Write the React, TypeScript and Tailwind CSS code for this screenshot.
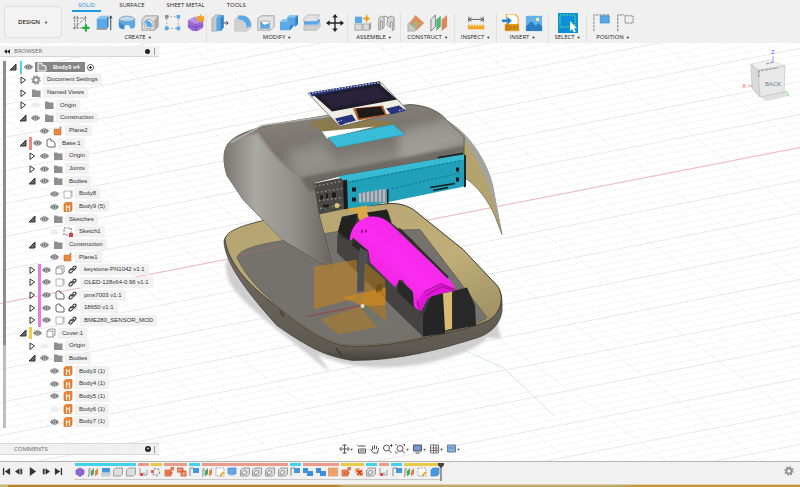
import type { ReactNode } from "react";

/* ---------- ribbon icons (20 x 20 grid) ---------- */

const BLUE = "#5aa9e6";
const DARKBLUE = "#2f7fc4";

const ribbonIcons: Record<string, ReactNode> = {
  sketch: (
    <g fill="none" stroke="#777" strokeWidth="1">
      <path d="M3 2v16M1 4.500h16M1 15.500h12M15 2v9M3 15L15 4M6 2v14" strokeDasharray="3 1" />
      <path d="M15.500 11.500v8M11.500 15.500h8" stroke="#27a83a" strokeWidth="2.400" />
    </g>
  ),
  extrude: (
    <g>
      <path d="M2 5l4-3h9l-2 3z" fill="#8cc6f0" />
      <path d="M2 5h11v12H2z" fill={BLUE} />
      <path d="M13 5l2-3v12l-2 3z" fill={DARKBLUE} />
      <path d="M2 15.500h11v2H2z" fill="#999" />
      <path d="M17.500 18V3M16 5l1.500-3L19 5" stroke="#333" fill="none" />
    </g>
  ),
  revolve: (
    <g>
      <path d="M1 6c3-5 15-5 18 0v8c-2 3-4 3-6 1v-2c-2-1-4-1-6 0v4c-3 0-5-1-6-3z" fill={BLUE} />
      <path d="M1 6c3-5 15-5 18 0-3 3-15 3-18 0z" fill="#b9d9f1" stroke="#888" strokeWidth=".7" />
      <path d="M1 8v6c1 2 3 3 6 3v-5c-3 0-5-2-6-4z" fill="#3a8cd0" />
    </g>
  ),
  hole: (
    <g>
      <path d="M1 6l4-4h14v12l-4 4H1z" fill="#dcdcdc" stroke="#888" strokeWidth=".8" />
      <path d="M15 18V7l4-5v12z" fill="#aaa" />
      <ellipse cx="8.500" cy="11" rx="5" ry="5" fill="#fff" stroke="#777" strokeWidth=".7" />
      <path d="M5 7c5 0 8 3 7 7-4 2-8 0-7-7z" fill={BLUE} />
    </g>
  ),
  pattern: (
    <g>
      <path d="M3 3h13v13H3z" fill="none" stroke="#999" strokeDasharray="2 2" />
      <path d="M14 1h4v4h-4zM1 14h4v4H1zM14 14h4v4h-4z" fill={BLUE} />
      <path d="M1 1h4v4H1z" fill="#8a9096" />
    </g>
  ),
  form: (
    <g>
      <path d="M1 7l8-4 9 4v8l-6 4H6l-5-4z" fill="#9b6bd3" />
      <path d="M1 7l8-4 9 4-8 4z" fill="#b994e6" />
      <path d="M10 11v8M1 13l9 2 8-3" stroke="#7a46b8" fill="none" />
      <path d="M15 0l1.400 2.600L19 2l-.6 2.800L20 7l-3 .4L15 10l-1.700-2.600L10 7l1.600-2.200L11 2l2.600.6z" fill="#f5a21c" />
    </g>
  ),
  presspull: (
    <g>
      <path d="M1 5l4-4h5v14l-3 4H1z" fill="#c9c9c9" stroke="#888" strokeWidth=".6" />
      <path d="M6 5l3-4h5v14l-3 4H6z" fill={BLUE} />
      <path d="M11 5l3-4v14l-3 4z" fill={DARKBLUE} />
      <path d="M14 10h5M17 8l2 2-2 2" stroke="#333" fill="none" />
    </g>
  ),
  fillet: (
    <g>
      <path d="M1 6l4-4h4c6 0 10 5 10 11v2l-5 4H1z" fill="#dedede" stroke="#999" strokeWidth=".6" />
      <path d="M5 2h4c6 0 10 5 10 11l-5 3C14 10 11 6 4 6z" fill={BLUE} />
      <path d="M1 6h3c6 0 10 4 10 10v3H1z" fill="#cfcfcf" />
    </g>
  ),
  shell: (
    <g>
      <path d="M1 5l4-3h14v12l-4 4H1z" fill="#e4e4e4" stroke="#888" strokeWidth=".8" />
      <path d="M4 8h10v8H4z" fill="#fff" stroke="#777" strokeWidth=".6" />
      <path d="M4 16V8l4 4 6-2v6z" fill={BLUE} />
    </g>
  ),
  combine: (
    <g>
      <path d="M8 4l3-3h9v10l-3 3h-3l-3 4H0V9l3-3h5z" fill={BLUE} />
      <path d="M17 4l3-3v10l-3 3zM11 14l3-3v4l-3 3z" fill={DARKBLUE} />
      <path d="M8 4l3-3h9l-3 3zM0 9l3-3h5v3z" fill="#8cc6f0" />
    </g>
  ),
  offset: (
    <g>
      <path d="M1 5l4-4h14l-3 4v4H1z" fill="#e2e2e2" stroke="#999" strokeWidth=".6" />
      <path d="M1 8h14l4-3v4l-3 3H1z" fill={BLUE} />
      <path d="M1 13h15l3-3v4l-4 4H1z" fill="#cfcfcf" stroke="#999" strokeWidth=".6" />
    </g>
  ),
  move: (
    <g>
      <path d="M10 2v16M2 10h16" stroke="#222" strokeWidth="1.500" />
      <path d="M10 0L7 4h6zM10 20l-3-4h6zM0 10l4-3v6zM20 10l-4-3v6z" fill="#222" />
    </g>
  ),
  component: (
    <g>
      <path d="M1 3h8v7H1z" fill={BLUE} />
      <path d="M1 11h8v7H1zM10 11h7v7h-7z" fill="#dadada" stroke="#888" strokeWidth=".7" />
      <path d="M17 11l2-2v7l-2 2z" fill="#999" />
      <path d="M14 0l1.500 3.500L19 5l-3.500 1.500L14 10l-1.500-3.500L9 5l3.500-1.500z" fill="#f5a21c" />
    </g>
  ),
  joint: (
    <g fill="#d5d5d5" stroke="#888" strokeWidth=".9">
      <path d="M2 18V5l3-3 3 2v10l-2 3V8H4v9zM12 4l5-2 2 2v13l-2 2V9h-2v6l-4-3z" />
      <path d="M7 4c2-2 3-2 5 0" fill="none" stroke="#666" />
    </g>
  ),
  plane: (
    <g>
      <path d="M1 19V11l6-5v7h6l-4 6z" fill="#c9ccc8" stroke="#888" strokeWidth=".6" />
      <path d="M9 1l10 9-8 8-8-7z" fill="#e08e5c" />
      <path d="M8 8l5 2-3 8-4-5z" fill="#8bc09a" opacity=".8" />
    </g>
  ),
  midplane: (
    <g>
      <path d="M1 6l5-5v13l-5 5z" fill="#e5e5e5" stroke="#777" />
      <path d="M7 6l5-4v12l-5 5z" fill="#4db87d" />
      <path d="M13 6l6-5v13l-6 5z" fill="#e0875a" />
    </g>
  ),
  measure: (
    <g>
      <path d="M2 3v6M18 3v6M2 6h16M5 4L2 6l3 2M15 4l3 2-3 2" stroke="#555" fill="none" />
      <path d="M1 12h18v5H1z" fill="#f0a41f" />
      <path d="M4 12v2M7 12v2M10 12v2M13 12v2M16 12v2" stroke="#fff" />
    </g>
  ),
  insert: (
    <g>
      <path d="M5 0h9l4 4v10H5z" fill="#fff" stroke="#f0a41f" strokeWidth="1.200" />
      <path d="M3 11h16v8H3z" fill="#e89b16" />
      <path d="M5 13h3v4H5zM10 13v4M12 13l3 4M15 13l-3 4M17 13v4" stroke="#8a5604" fill="none" strokeWidth=".8" />
      <path d="M0 6h6V3l5 4.500L6 12V9H0z" fill="#2284d2" />
    </g>
  ),
  image: (
    <g>
      <path d="M1 2h18v17H1z" fill="#64b1ea" />
      <path d="M1 14l6-6 5 5 3-3 4 4v5H1z" fill="#2b7fc2" />
      <circle cx="14" cy="6" r="2" fill="#fbe9a0" />
    </g>
  ),
  select: (
    <g>
      <path d="M0 0h20v20H0z" fill="#0c8edb" />
      <path d="M2 2h15v12H2z" fill="none" stroke="#5be08a" strokeDasharray="2 1" />
      <path d="M12 8v10l2.300-2 1.600 3.500 1.800-.9-1.600-3.300H19z" fill="#fff" />
    </g>
  ),
  capture: (
    <g>
      <path d="M1 19V1h17" fill="none" stroke="#777" strokeDasharray="3 1" />
      <path d="M8 2h10v8H8z" fill={BLUE} stroke={DARKBLUE} strokeWidth=".7" />
    </g>
  ),
  revert: (
    <g fill="none" stroke="#666">
      <path d="M2 19V1h7" strokeDasharray="3 1" />
      <path d="M10 2h9v8h-9z" strokeDasharray="2 1" />
    </g>
  ),
};

type Group = { label: string; icons: string[]; width: string };

const groups: Group[] = [
  { label: "CREATE", icons: ["sketch", "extrude", "revolve", "hole", "pattern", "form"], width: "w-[137px] border-r" },
  { label: "MODIFY", icons: ["presspull", "fillet", "shell", "combine", "offset", "move"], width: "w-[141px] border-r" },
  { label: "ASSEMBLE", icons: ["component", "joint"], width: "w-[53px] border-r" },
  { label: "CONSTRUCT", icons: ["plane", "midplane"], width: "w-[54px] border-r" },
  { label: "INSPECT", icons: ["measure"], width: "w-[42px] border-r" },
  { label: "INSERT", icons: ["insert", "image"], width: "w-[52px] border-r" },
  { label: "SELECT", icons: ["select"], width: "w-[38px] border-r" },
  { label: "POSITION", icons: ["capture", "revert"], width: "w-[52px]" },
];

function Ribbon() {
  return (
    <header className="flex h-[43px] shrink-0 bg-[#f0f0f0]">
      <button className="mt-[6px] mr-2 ml-[4px] flex h-8 w-[58px] shrink-0 items-center justify-center gap-1 rounded-sm border border-[#dcdcdc] bg-[#f3f3f3] font-semibold">
        DESIGN <span className="text-[4px]">▼</span>
      </button>
      <div className="flex min-w-0 flex-1 flex-col">
        <nav className="flex h-[12px] shrink-0 gap-[22px] pl-[2px]">
          <button className="border-b-2 border-[#1a9be0] px-[6px] text-[#1a8fd8]">SOLID</button>
          <button className="-ml-[4px] border-b-2 border-transparent">SURFACE</button>
          <button className="border-b-2 border-transparent">SHEET METAL</button>
          <button className="border-b-2 border-transparent">TOOLS</button>
        </nav>
        <div className="flex pt-px">
          {groups.map((g) => (
            <section key={g.label} className={`${g.width} flex shrink-0 flex-col items-center border-[#e0e0e0]`}>
              <div className="flex h-5 gap-[3px]">
                {g.icons.map((n) => (
                  <button key={n} aria-label={n} className="flex size-5 items-center justify-center">
                    <svg viewBox="0 0 20 20" className={n === "select" ? "size-5" : "size-[18px]"}>
                      {ribbonIcons[n]}
                    </svg>
                  </button>
                ))}
              </div>
              <button className="flex h-[9px] items-center gap-[2px]">
                {g.label} <span className="text-[4px]">▼</span>
              </button>
            </section>
          ))}
        </div>
      </div>
    </header>
  );
}

/* ---------- browser tree ---------- */

type Kind = "gear" | "folder" | "plane" | "comp" | "body" | "bodyOrange" | "sketch" | "box" | "doc";
type Row = {
  label: string;
  depth: 0 | 1 | 2 | 3;
  arrow?: "open" | "closed";
  bar?: "pink" | "magenta" | "yellow" | "cyan";
  eye?: "on" | "off";
  kind: Kind;
  link?: boolean;
};

const rows: Row[] = [
  { label: "Body3 v4", depth: 0, arrow: "open", bar: "cyan", eye: "on", kind: "doc" },
  { label: "Document Settings", depth: 1, arrow: "closed", kind: "gear" },
  { label: "Named Views", depth: 1, arrow: "closed", kind: "folder" },
  { label: "Origin", depth: 1, arrow: "closed", eye: "off", kind: "folder" },
  { label: "Construction", depth: 1, arrow: "open", eye: "on", kind: "folder" },
  { label: "Plane2", depth: 2, eye: "on", kind: "plane" },
  { label: "Base:1", depth: 1, arrow: "open", bar: "pink", eye: "on", kind: "comp" },
  { label: "Origin", depth: 2, arrow: "closed", eye: "on", kind: "folder" },
  { label: "Joints", depth: 2, arrow: "closed", eye: "on", kind: "folder" },
  { label: "Bodies", depth: 2, arrow: "open", eye: "on", kind: "folder" },
  { label: "Body8", depth: 3, eye: "on", kind: "body" },
  { label: "Body9 (5)", depth: 3, eye: "on", kind: "bodyOrange" },
  { label: "Sketches", depth: 2, arrow: "open", eye: "on", kind: "folder" },
  { label: "Sketch1", depth: 3, eye: "off", kind: "sketch" },
  { label: "Construction", depth: 2, arrow: "open", eye: "on", kind: "folder" },
  { label: "Plane1", depth: 3, eye: "on", kind: "plane" },
  { label: "keystone-PN1042 v1:1", depth: 2, arrow: "closed", bar: "magenta", eye: "on", kind: "box", link: true },
  { label: "OLED-128x64-0.96 v1:1", depth: 2, arrow: "closed", bar: "magenta", eye: "on", kind: "body", link: true },
  { label: "pms7003 v1:1", depth: 2, arrow: "closed", bar: "magenta", eye: "on", kind: "comp", link: true },
  { label: "18650 v1:1", depth: 2, arrow: "closed", bar: "magenta", eye: "on", kind: "comp", link: true },
  { label: "BME280_SENSOR_MOD", depth: 2, arrow: "closed", bar: "magenta", eye: "on", kind: "body", link: true },
  { label: "Cover:1", depth: 1, arrow: "open", bar: "yellow", eye: "on", kind: "box" },
  { label: "Origin", depth: 2, arrow: "closed", eye: "off", kind: "folder" },
  { label: "Bodies", depth: 2, arrow: "open", eye: "on", kind: "folder" },
  { label: "Body3 (1)", depth: 3, eye: "on", kind: "bodyOrange" },
  { label: "Body4 (1)", depth: 3, eye: "on", kind: "bodyOrange" },
  { label: "Body5 (1)", depth: 3, eye: "on", kind: "bodyOrange" },
  { label: "Body6 (1)", depth: 3, eye: "off", kind: "bodyOrange" },
  { label: "Body7 (1)", depth: 3, eye: "on", kind: "bodyOrange" },
];

const indent = ["pl-0", "pl-[10px]", "pl-[19px]", "pl-[29px]"];
const barColor = { pink: "bg-[#f08a80]", magenta: "bg-[#e87be8]", yellow: "bg-[#efcf45]", cyan: "bg-[#4fd0ee]" };

function TreeIcon({ kind }: { kind: Kind }) {
  const art: Record<Kind, ReactNode> = {
    gear: (
      <g fill="none" stroke="#909090">
        <circle cx="5" cy="5" r="2.700" strokeWidth="2" />
        <circle cx="5" cy="5" r="4.100" strokeWidth="1.200" strokeDasharray="1.600 1.600" />
      </g>
    ),
    folder: <path d="M1 1.500h3l1 1h4.500V9H1z" fill="#8f8f8f" />,
    plane: <path d="M1 3h6V1h1v8H1z" fill="#e8893f" stroke="#a8663c" strokeWidth=".5" />,
    comp: <path d="M1 2l2-1h2v2h2l2 2v4H3L1 8z" fill="#fff" stroke="#666" />,
    doc: <path d="M1 1h4v2l4 1v5H1z" fill="#999" stroke="#fff" />,
    body: <path d="M1 2h7v7H1zM8 4l1-2v6" fill="#fff" stroke="#aaa" strokeWidth=".9" />,
    bodyOrange: (
      <g>
        <path d="M1 2l2-1.500h6V8L7.500 9.500H1z" fill="#ee8436" stroke="#c9651c" strokeWidth=".6" />
        <path d="M3.500 3v6M6.500 3v6M3.500 5h3" stroke="#fff" strokeWidth=".9" />
      </g>
    ),
    sketch: (
      <g>
        <path d="M1 1h7v7H1z" fill="none" stroke="#666" strokeDasharray="2 1.500" />
        <path d="M6 6h4v4H6z" fill="#df3b46" />
      </g>
    ),
    box: <path d="M1 3l2-2h6v6L7 9H1zM1 3h6v6" fill="#fff" stroke="#888" strokeWidth=".9" />,
  };
  return (
    <svg viewBox="0 0 10 10" className="size-[10px]">
      {art[kind]}
    </svg>
  );
}

function TreeRow({ row }: { row: Row }) {
  const root = row.depth === 0;
  return (
    <li className={`flex min-h-0 flex-1 items-center ${indent[row.depth]}`}>
      <span className="flex w-[13px] shrink-0 justify-center">
        {row.arrow && (
          <button aria-label={`Toggle ${row.label}`}>
            <svg viewBox="0 0 8 8" className="size-[8px]">
              {row.arrow === "open" ? (
                <path d="M1 7h6V1z" fill="#666" stroke="#333" />
              ) : (
                <path d="M2 1v6.500L6.500 4z" fill="#fff" stroke="#333" />
              )}
            </svg>
          </button>
        )}
      </span>
      {row.bar && (
        <span className={`h-full shrink-0 ${root ? "ml-px w-[2px]" : "-mr-px w-[3px]"} ${barColor[row.bar]}`} />
      )}
      {row.eye && (
        <button aria-label={`Visibility of ${row.label}`} className="flex w-[13px] shrink-0 justify-center">
          <svg viewBox="0 0 10 6" className={`h-[6px] w-[9px] ${row.eye === "off" ? "opacity-15" : ""}`}>
            <path d="M0 3c2.500-4 7.500-4 10 0-2.500 4-7.500 4-10 0z" fill="#8a8a8a" />
            <circle cx="5" cy="3" r="1.700" fill="#ddd" />
            <circle cx="5" cy="3" r="1" fill="#555" />
          </svg>
        </button>
      )}
      <span className={`flex h-[10px] items-center ${root ? "bg-[#858585] pr-px font-bold text-white" : ""}`}>
        <span className="flex w-[13px] shrink-0 justify-center">
          <TreeIcon kind={row.kind} />
        </span>
        {row.link && (
          <svg viewBox="0 0 10 10" className="mx-[2px] size-[9px]" fill="none" stroke="#333" strokeWidth="1.300">
            <path d="M4 6L6.500 3.500M5 3l1.500-1.500a1.400 1.400 0 012 2L7 5.500 5.500 6M5 4L3 4.500 1.500 6.500a1.400 1.400 0 002 2L5.500 7" />
          </svg>
        )}
        <span className={`ml-px h-[11px] px-[4px] leading-[11px] whitespace-nowrap ${root ? "" : "bg-[#f1f1f1]"}`}>{row.label}</span>
      </span>
      {root && (
        <input
          type="radio"
          defaultChecked
          aria-label={`Activate ${row.label}`}
          className="ml-[2px] size-[7px] appearance-none rounded-full border border-[#555] bg-[radial-gradient(#333_30%,#fff_40%)]"
        />
      )}
    </li>
  );
}

function Browser() {
  return (
    <aside className="relative flex min-h-0 flex-1 flex-col pt-[3px]">
      <div className="flex h-[11px] w-[159px] items-center border-b border-[#d5d5d5] bg-[#f0f0f0] px-1 text-[#666]">
        <svg viewBox="0 0 8 6" className="h-[5px] w-[6px]">
          <path d="M4 0v6L0 3zM8 0v6L4 3z" fill="#222" />
        </svg>
        <span className="ml-1 flex-1">BROWSER</span>
        <button aria-label="Browser options" className="size-[5px] rounded-full bg-[#222]" />
        <span className="ml-1 h-[7px] w-px bg-[#999]" />
      </div>
      <div className="flex pt-[4px]">
        <div className="ml-[3px] w-[3px] bg-[#bdbdbd]">
          <div className="h-[284px] bg-[#8c8c8c]" />
        </div>
        <ul className="flex h-[367px] flex-col font-['Liberation_Sans',Arial,sans-serif] text-[6px] text-[#333]">
          {rows.map((r, i) => (
            <TreeRow key={i} row={r} />
          ))}
        </ul>
      </div>
    </aside>
  );
}

/* ---------- 3D canvas ---------- */

function Grid() {
  const lines: ReactNode[] = [];
  for (let i = -62; i < 72; i++) {
    const y = 304 + i * 6.6;
    lines.push(
      <line key={`a${i}`} x1="0" y1={y} x2="800" y2={y - 156} stroke={i % 5 === 0 ? "#dedede" : "#f2f2f2"} strokeWidth={i % 5 === 0 ? 0.7 : 0.7} />,
    );
  }
  for (let i = -34; i < 40; i++) {
    const x = 362 + i * 19;
    lines.push(
      <line key={`b${i}`} x1={x - 368} y1="43" x2={x + 212} y2="463" stroke={i % 5 === 0 ? "#ececec" : "#f7f7f7"} strokeWidth=".7" />,
    );
  }
  return <g>{lines}</g>;
}

function Scene() {
  return (
    <svg viewBox="0 43 800 419" preserveAspectRatio="xMidYMid slice" className="absolute inset-0 size-full" role="img" aria-label="Model of the enclosure">
      <defs>
        <linearGradient id="shell" x1="0" y1="0" x2="0.250" y2="1">
          <stop offset="0" stopColor="#8f8b84" />
          <stop offset=".35" stopColor="#77736c" />
          <stop offset=".5" stopColor="#918e88" />
          <stop offset=".75" stopColor="#706d66" />
          <stop offset="1" stopColor="#8a8780" />
        </linearGradient>
        <linearGradient id="side" x1="0" y1="0" x2="1" y2="0">
          <stop offset="0" stopColor="#77736e" />
          <stop offset=".3" stopColor="#aaa8a4" />
          <stop offset=".65" stopColor="#928f89" />
          <stop offset="1" stopColor="#65615b" />
        </linearGradient>
        <linearGradient id="rim" x1="0" y1="0" x2="0" y2="1">
          <stop offset="0" stopColor="#77736a" />
          <stop offset=".93" stopColor="#5e5a52" />
          <stop offset="1" stopColor="#45413c" />
        </linearGradient>
        <linearGradient id="tan" x1="0" y1="0" x2="1" y2="1">
          <stop offset="0" stopColor="#b3a26e" />
          <stop offset=".6" stopColor="#bfae78" />
          <stop offset="1" stopColor="#94865a" />
        </linearGradient>
        <linearGradient id="cell" x1="0" y1="1" x2="1" y2="0">
          <stop offset="0" stopColor="#dd16cf" />
          <stop offset=".5" stopColor="#fb2cf0" />
          <stop offset="1" stopColor="#e81bdc" />
        </linearGradient>
        <filter id="soft" x="-10%" y="-10%" width="120%" height="120%">
          <feGaussianBlur stdDeviation="1.500" />
        </filter>
        <filter id="softer" x="-30%" y="-30%" width="160%" height="160%">
          <feGaussianBlur stdDeviation="5" />
        </filter>
        <clipPath id="shellClip">
          <path d="M227 176C222 160 223 148 231 141 240 133 258 128 277 124L333 115 410 105C428 106 440 112 448 122L464 137V155L338 177 314 183 319 215 333 268 320 263 282 240 243 200Z" />
        </clipPath>
      </defs>
      <rect y="43" width="800" height="419" fill="#fff" />
      <Grid />
      <path d="M0 304L800 148" stroke="#f4b4b9" strokeWidth=".9" />
      <path d="M362 306L503 368 555 417" stroke="#c4efc4" strokeWidth=".8" fill="none" />

      {/* ground shadow */}
      <path d="M226 262C224 285 240 300 277 330L330 373 318 355C350 370 385 370 420 365 455 358 480 348 487 338L501 339 494 310 240 250Z" fill="#cfcfcf" filter="url(#soft)" />

      {/* base tray */}
      <path d="M224 243C224 233 240 227 277 218L343 209 390 204C402 204 410 207 417 213L463 250 497 286C503 294 502 303 502 312 500 324 492 333 478 338 440 350 400 361 353 361 325 357 307 347 277 326 240 285 226 262 224 243Z" fill="url(#rim)" stroke="#3c3833" strokeWidth=".7" />
      <path d="M225 240C226 231 243 225 277 218L343 209 390 204C402 204 410 207 417 213L463 250 497 286C505 297 501 313 490 320 479 327 450 333 425 338 395 345 365 348 343 346 320 341 295 322 277 307 246 284 228 262 225 240Z" fill="url(#tan)" stroke="#2c2a26" strokeWidth=".7" />
      <path d="M237 258C240 248 265 244 283 241L337 232 420 230 487 318C479 326 450 332 425 337 395 344 365 347 343 345 320 340 295 321 277 306 260 292 245 276 237 258Z" fill="#75716d" stroke="#4e4b46" strokeWidth=".5" />
      <path d="M237 256L283 246" stroke="#b07068" strokeWidth=".6" />

      {/* inner face of the cover, right hand side */}
      <path d="M448 122C468 134 485 158 492 185L502 235 495 217C488 200 477 187 466 179Z" fill="#b3a36f" stroke="#69665f" strokeWidth=".7" />
      <path d="M448 122C468 134 487 160 493 185L502 235C496 205 487 172 464 140Z" fill="#a5a39d" />

      {/* cover */}
      <path d="M227 176C222 160 223 148 231 141 240 133 258 128 277 124L333 115 410 105C428 106 440 112 448 122L464 137V155L338 177 314 183 319 215 333 268 320 263 282 240 243 200Z" fill="url(#shell)" stroke="#4b4843" strokeWidth=".8" />
      <g clipPath="url(#shellClip)">
        <path d="M222 140L258 134C275 160 300 180 313 190L319 215 334 270 280 242 222 180Z" fill="url(#side)" filter="url(#soft)" />
        <path d="M398 132L450 118 470 140 400 166Z" fill="#b5b2ad" opacity=".55" filter="url(#softer)" />
        <path d="M285 152L325 140 335 165 300 172Z" fill="#a09d97" opacity=".6" filter="url(#softer)" />
        <path d="M300 178L465 146V160L310 192Z" fill="#5f5b55" opacity=".7" filter="url(#soft)" />
      </g>
      <path d="M258 129L283 163 313 188" stroke="#6b6862" strokeWidth=".5" fill="none" />
      <path d="M231 143L262 126 333 116" stroke="#b0aea9" strokeWidth="1.500" fill="none" />

      {/* cut-out in the cover */}
      <path d="M309 123L336 117 393 122 396 127 330 137Z" fill="#8a7a4d" />
      <path d="M322 132L375 127 327 139Z" fill="#fff" />
      <path d="M328 138L393 125 405 135 337 148Z" fill="#38bcd8" stroke="#2894ad" strokeWidth=".5" />

      {/* display board */}
      <path d="M308 94L380 82 407 110 340 127 335 122Z" fill="#f0ede4" stroke="#555" strokeWidth=".7" />
      <path d="M309 93L379 82 381 85 312 97Z" fill="#27347c" />
      <path d="M314 96L379 84 397 100 332 112Z" fill="#201d2b" />
      <path d="M320 97L377 87 388 98 333 108Z" fill="#28233a" />
      <path d="M335 119L352 115 356 121 340 126ZM386 109L399 106 406 111 391 115Z" fill="#27347c" />
      <path d="M353 109L383 106 387 116 358 121Z" fill="#b4612b" />
      <path d="M356 109L381 107 385 115 359 119Z" fill="#1d1a1a" />
      <path d="M309 94L379 83M338 122l4-1M345 124l4-1M399 111l4-1" stroke="#d6d6df" strokeWidth="1.200" strokeDasharray="1.500 1.500" />

      {/* sensor module behind the front opening */}
      <path d="M314 184L343 178 347 209 319 215Z" fill="#4a4845" />
      <path d="M315 187L340 182M317 193L342 189M319 201L343 198M320 209L344 205" stroke="#99958e" strokeWidth="1.300" strokeDasharray="1.500 2.500" />
      <path d="M320 196h3v4h-3zM326 194h2v5h-2zM332 193h4v5h-4zM323 205h6v3h-6z" fill="#1d1c1b" />
      <circle cx="337" cy="206" r="2.500" fill="#dcc27b" />
      <path d="M338 177L464 155V187L347 211 344 181Z" fill="#21a0ba" />
      <path d="M338 177L464 155V160L346 182Z" fill="#37bbd4" />
      <path d="M343 181L347 180 348 211 344 210ZM387 190h1.500v14h-1.500z" fill="#171b1c" />
      <path d="M464 155l2 1v31l-2 1z" fill="#232323" />
      <path d="M348 183L462 161M388 190L462 173" stroke="#126577" strokeWidth=".8" strokeDasharray="2 2" />
      <path d="M438 158L463 154M430 188L455 184M433 191L448 188" stroke="#1a1d1e" strokeWidth="1.300" />
      <path d="M352 188h4v4h-4zM352 198h4v4h-4zM456 168h3v4h-3zM456 178h3v4h-3z" fill="#121617" />
      <path d="M358 194L386 189 387 203 360 203Z" fill="#739ba4" />
      <path d="M360 194v9M364 193v9M368 192v10M372 192v10M376 191v11M380 190v12M384 190v12" stroke="#e2c2d1" strokeWidth="1.400" />

      {/* battery holder */}
      <path d="M338 232L342 217 358 214 388 212 392 224 412 240 448 283 475 310V326L423 337 337 253Z" fill="#3a3a39" />
      <path d="M337 236L352 248 360 252 358 270 337 253Z" fill="#4c4b49" />
      <path d="M343 210L367 206 369 219 360 222 356 213Z" fill="#d9a947" />
      <path d="M367 213L387 210 391 223 370 219ZM338 232L342 218 358 214 355 225 350 242Z" fill="#222221" />
      <path d="M350 245C348 229 360 216 374 217 380 217 386 220 390 224L448 279C453 284 455 287 455 291L441 294 428 297 420 312 413 306 412 294 402 280 395 288 370 263 368 251 353 238Z" fill="url(#cell)" />
      <path d="M353 241L368 251 370 263 395 288 400 280 412 291 413 307 423 315V337L337 253 338 238Z" fill="#444341" />
      <path d="M353 240L368 251 369 258 352 246ZM399 280L413 293 414 308 397 292Z" fill="#292928" />
      <path d="M423 293L441 284 455 290 428 299 421 312 416 305Z" fill="#df16d4" />
      <path d="M424 292L441 284 455 290M426 296L442 287 454 291M417 300L420 312" stroke="#77106f" strokeWidth=".7" fill="none" />
      <path d="M361 232l7-1" stroke="#9c168f" strokeWidth="3" strokeDasharray="2 2" />
      <path d="M360 248L368 252 365 292H357L358 263Z" fill="#4e4f50" />
      <path d="M399 229L448 278" stroke="#282a24" strokeWidth="2" />
      <path d="M423 317L431 297 442 294 446 298 445 334 423 337Z" fill="#252525" />
      <path d="M452 296L455 291 467 288 475 306 476 326 453 330Z" fill="#282828" />
      <path d="M443 294L452 292V329L445 331Z" fill="#d5bb73" />

      {/* construction planes and origin */}
      <path d="M314 267L357 260V298L314 310Z" fill="#c4841c" opacity=".55" />
      <path d="M365 263L385 280 386 322 363 303Z" fill="#b47a17" opacity=".55" />
      <path d="M342 298L386 288 385 306 362 306Z" fill="#d28c1b" opacity=".65" />
      <path d="M320 320L360 307 377 328 338 335Z" fill="#b07d25" opacity=".55" />
      <path d="M376 286l6-2v7l-6 2z" fill="#6b4d17" opacity=".8" />
      <path d="M307 317L362 306" stroke="#974047" strokeWidth="1" />
      <path d="M362 306L387 331" stroke="#52914b" strokeWidth="1" />
      <circle cx="362.500" cy="306.500" r="2" fill="#e4ddd0" />
      <path d="M280 312l4 5M336 349l6 7" stroke="#2b2926" strokeWidth="2" strokeDasharray="1 1" />
    </svg>
  );
}

function ViewCube() {
  return (
    <svg viewBox="0 0 60 60" className="absolute top-[3px] right-0 size-[60px]" role="img" aria-label="View cube">
      <path d="M14 46l12 9 22-5-3-5z" fill="#ccc" opacity=".6" />
      <path d="M11 18L30 14 45 20 18 24Z" fill="#f0f0f0" stroke="#ccc" strokeWidth=".6" />
      <path d="M11 18L18 24 20 51 12 42Z" fill="#dadada" stroke="#bbb" strokeWidth=".6" />
      <path d="M18 24L45 20 44 46 20 51Z" fill="#e8e8e8" stroke="#bbb" strokeWidth=".6" />
      <path d="M19 31v-6l19-3M26 18l8-2" stroke="#777" strokeDasharray="3 1" fill="none" strokeWidth=".8" />
      <text x="25" y="40" fontSize="6" fontFamily="Liberation Sans" fill="#777">BACK</text>
      <path d="M33 17V10" stroke="#99f" />
      <path d="M8 40h5" stroke="#f88" />
      <path d="M45 46c2-1 4 1 3 4" stroke="#6e6" fill="none" />
      <text x="31" y="8" fontSize="6" fontFamily="Liberation Sans" fill="#66f">Z</text>
      <text x="2" y="42" fontSize="6" fontFamily="Liberation Sans" fill="#f55">X</text>
    </svg>
  );
}

const navTools: { name: string; caret: boolean; art: ReactNode }[] = [
  { name: "Orbit", caret: true, art: <path d="M0 5h10M5 1v8M2 3L0 5l2 2M8 3l2 2-2 2M3 2l2-2 2 2M3 8l2 2 2-2" /> },
  { name: "Look at", caret: false, art: <path d="M1 1l2 2M3 2h6M3 5h6v4H2V5zM3 7h5" /> },
  { name: "Pan", caret: false, art: <path d="M1 5l3 4h4l1-5M3 6V2M5 5V1M7 5V2" /> },
  { name: "Zoom", caret: false, art: <path d="M7 4a3 3 0 11-6 0 3 3 0 016 0zM6 6l3 3M9 0v3M7.500 1.500h3" /> },
  { name: "Zoom window", caret: true, art: <path d="M7.500 4.500a3 3 0 11-6 0 3 3 0 016 0zM6.500 6.500l3 3M0 2V0h2M7 0h2v2M0 7v2h2" /> },
  { name: "Display", caret: true, art: <path d="M1 1h8v6H1zM3 9h4" fill="#6f9bd0" /> },
  { name: "Grid", caret: true, art: <path d="M1 1h8v8H1zM1 4h8M1 6.500h8M4 1v8M6.500 1v8" strokeWidth=".8" /> },
  { name: "Viewports", caret: true, art: <path d="M1 1h8v7H1zM1 4h8" fill="#82b1e4" stroke="#6a7f9c" /> },
];

function NavBar() {
  return (
    <nav className="absolute bottom-[7px] left-1/2 flex -translate-x-1/2 gap-[3px]">
      {navTools.map((t) => (
        <button key={t.name} aria-label={t.name} className="flex items-center">
          <svg viewBox="0 0 10 10" className="size-[10px]" fill="none" stroke="#555" strokeWidth="1">
            {t.art}
          </svg>
          {t.caret && <span className="w-[4px] text-[4px] text-[#444]">▼</span>}
        </button>
      ))}
    </nav>
  );
}

/* ---------- timeline ---------- */

const featureArt: Record<string, ReactNode> = {
  form: <path d="M1 3l4-2 4 2v4L5 9.500 1 7z" fill="#8d68cf" stroke="#6d48ad" strokeWidth=".6" />,
  planes: (
    <g>
      <path d="M0 4l2-3v6l-2 3z" fill="#ddd" stroke="#777" strokeWidth=".6" />
      <path d="M3 4l3-3v6L3 9.500z" fill="#42ab6b" />
      <path d="M7 4l3-3v6L7 9.500z" fill="#e38345" />
    </g>
  ),
  offset: (
    <g>
      <path d="M0 6h8l2-2v4L8 9.500H0z" fill="#ccc" />
      <path d="M1 1h8v3l-1 1.500H1z" fill="#4395dd" />
    </g>
  ),
  block: <path d="M.5 3L3 1h6.500v6l-2 2h-7z" fill="#ddd" stroke="#8d8d8d" strokeWidth=".8" />,
  joint: (
    <g>
      <path d="M1 1v7h4V5M8 3v5H5" fill="none" stroke="#999" />
      <path d="M1 6h3v3H1z" fill="#dc5046" />
    </g>
  ),
  ring: (
    <g>
      <circle cx="5" cy="5" r="3.500" fill="none" stroke="#999" strokeDasharray="2 1.500" strokeWidth="1.500" />
      <path d="M0 3h3v3H0z" fill="#e0614f" />
    </g>
  ),
  orange: <path d="M1 3h6v6H1zM7 0h3v3H7zM3 5h5v2H3z" fill="#e98a52" stroke="#d2563b" strokeWidth=".7" />,
  copy: <path d="M0 1h6v4H0zM4 4h5v5H4z" fill="#ee9b6a" stroke="#d4503a" strokeWidth=".9" />,
  flag: (
    <g>
      <path d="M1 9V1h4" fill="none" stroke="#888" />
      <path d="M4 1h6v5H4z" fill="#4395dd" />
    </g>
  ),
  sketch: (
    <g>
      <path d="M1 1h8v8H1z" fill="#fff" stroke="#aaa" strokeDasharray="2 1" />
      <path d="M9 5L5 9" stroke="#eba72b" strokeWidth="1.800" />
    </g>
  ),
  blue: <path d="M1 1h8v6H1zM3 8h4" fill="#64a9e3" stroke="#478bc5" strokeWidth=".7" />,
  hole: (
    <g>
      <path d="M.5 3L3 1h6.500v6l-2 2h-7z" fill="#ddd" stroke="#888" strokeWidth=".8" />
      <path d="M2 7c0-4 4-4 5-2-1 2-3 3-5 2z" fill="#fff" stroke="#666" strokeWidth=".8" />
    </g>
  ),
  combine: <path d="M0 1h5v3h5v5H4V6H0z" fill="#3d8fd8" />,
  tile: <path d="M0 1h10v8H0zM0 5h10M5 1v8" fill="#f0a66c" stroke="#e38f50" strokeWidth=".6" />,
  remove: (
    <g>
      <path d="M1 1h5v5H1zM4 4h5v5H4z" fill="#f3b36b" />
      <path d="M3 3l5 5M8 3L3 8" stroke="#d02626" strokeWidth="1.400" />
    </g>
  ),
  extrude: <path d="M1 3l2-2h6v6L7 9H1z" fill="#4997df" stroke="#2f7fc4" strokeWidth=".6" />,
};

const CYAN = "bg-[#41d2ee]";
const SALMON = "bg-[#ee9a8b]";
const YELLOW = "bg-[#e8ca45]";

const track: { color: string; span: string; items: string[] }[] = [
  { color: CYAN, span: "col-span-5", items: ["form", "planes", "offset", "block", "block"] },
  { color: SALMON, span: "col-span-1", items: ["joint"] },
  { color: YELLOW, span: "col-span-1", items: ["ring"] },
  { color: SALMON, span: "col-span-2", items: ["orange", "copy"] },
  { color: CYAN, span: "col-span-1", items: ["flag"] },
  { color: SALMON, span: "col-span-7", items: ["planes", "sketch", "blue", "hole", "hole", "hole", "hole"] },
  { color: CYAN, span: "col-span-1", items: ["flag"] },
  { color: SALMON, span: "col-span-3", items: ["combine", "combine", "tile"] },
  { color: YELLOW, span: "col-span-2", items: ["orange", "remove"] },
  { color: CYAN, span: "col-span-1", items: ["hole"] },
  { color: SALMON, span: "col-span-1", items: ["joint"] },
  { color: CYAN, span: "col-span-1", items: ["flag"] },
  { color: YELLOW, span: "col-span-3", items: ["planes", "sketch", "extrude"] },
];

const transport: [string, string][] = [
  ["Go to start", "M1 1v8h1.500V1zM9 1v8L3 5z"],
  ["Step back", "M0 5l5-3.500v7zM6 2h2v6H6z"],
  ["Play", "M2 0v10l7-5z"],
  ["Step forward", "M2 2h2v6H2zM10 5L5 1.500v7z"],
  ["Go to end", "M1 1v8l6-4zM7.500 1v8H9V1z"],
];

function Timeline() {
  return (
    <footer className="shrink-0">
      <div className="flex h-[23px] items-start border-t border-[#b5b5b5] bg-[#f1f1f1]">
        <div className="flex gap-[3px] pt-[4px] pl-[2px]">
          {transport.map(([name, d]) => (
            <button key={name} aria-label={name} className="size-[10px]">
              <svg viewBox="0 0 10 10" className="size-[9px]" fill="#333">
                <path d={d} />
              </svg>
            </button>
          ))}
        </div>
        <div className="ml-[10px] grid w-[367px] grid-cols-29 border-b border-[#c8c8c8] pt-px">
          {track.map((t, i) => (
            <div key={i} className={t.span}>
              <div className={`mx-px h-[3px] ${t.color}`} />
              <div className="flex justify-around pt-px pb-[2px]">
                {t.items.map((n, j) => (
                  <button key={j} aria-label={n} className="size-[10px]">
                    <svg viewBox="0 0 10 10" className="size-[10px]">
                      {featureArt[n]}
                    </svg>
                  </button>
                ))}
              </div>
            </div>
          ))}
        </div>
        <svg viewBox="0 0 6 18" className="-ml-[3px] mt-px h-[18px] w-[6px]">
          <path d="M0 0h6v2L3.500 5v13h-1V5L0 2z" fill="#444" />
        </svg>
        <button aria-label="Timeline settings" className="mt-[4px] mr-[6px] ml-auto size-[10px]">
          <svg viewBox="0 0 10 10" className="size-[10px]">
            <circle cx="5" cy="5" r="2.700" fill="none" stroke="#888" strokeWidth="1.700" />
            <circle cx="5" cy="5" r="4.100" fill="none" stroke="#888" strokeWidth="1.200" strokeDasharray="1.600 1.600" />
          </svg>
        </button>
      </div>
      <div className="h-[3px] border-t border-[#dfd2b5] bg-[linear-gradient(90deg,#c9b284_0_1%,#b9822b_1%_42%,#c0a56d_43%_77%,#c9953a_80%)]" />
    </footer>
  );
}

export default function App() {
  return (
    <div className="flex h-screen flex-col overflow-hidden bg-white font-['Open_Sans','Noto_Sans',sans-serif] text-[6px] leading-[9px] text-[#222]">
      <Ribbon />
      <main className="relative flex min-h-0 flex-1 flex-col">
        <Scene />
        <Browser />
        <div className="relative mb-[6px] flex h-[12px] w-[159px] items-center border-y border-[#d8d8d8] bg-[#f0f0f0] pr-1 pl-[14px] text-[#666]">
          <span className="flex-1">COMMENTS</span>
          <button aria-label="Add comment" className="flex size-[6px] items-center justify-center rounded-full bg-[#222] text-[5px] leading-[5px] text-white">
            +
          </button>
          <span className="ml-[3px] h-[7px] w-px bg-[#999]" />
        </div>
        <ViewCube />
        <NavBar />
      </main>
      <Timeline />
    </div>
  );
}
